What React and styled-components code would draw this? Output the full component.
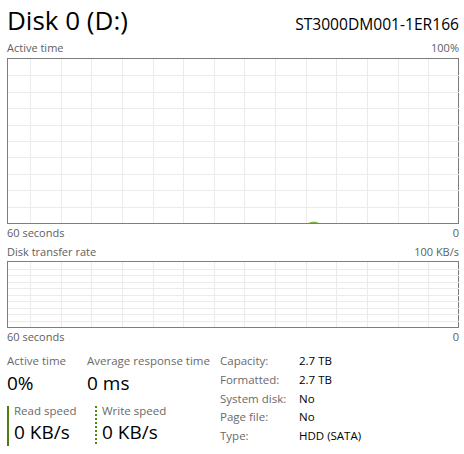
import React from "react";
import styled, { createGlobalStyle } from "styled-components";

const GlobalStyle = createGlobalStyle`
  html, body {
    margin: 0;
    padding: 0;
    background: #fff;
  }
  body {
    font-family: "Open Sans", "Noto Sans", sans-serif;
  }
`;

const Page = styled.div`
  width: 464px;
  height: 454px;
  box-sizing: border-box;
  padding: 2px 5px 0 7px;
  display: flex;
  flex-direction: column;
  overflow: hidden;
`;

const Header = styled.div`
  display: flex;
  align-items: baseline;
  justify-content: space-between;
  height: 36px;
`;

const Title = styled.div`
  font-size: 26px;
  line-height: 36px;
  color: #000;
`;

const Model = styled.div`
  font-size: 15.6px;
  color: #000;
`;

const ChartLabels = styled.div`
  display: flex;
  justify-content: space-between;
  font-size: 11px;
  line-height: ${({ $lh }) => $lh || 20}px;
  padding-top: ${({ $pad }) => $pad || 0}px;
  color: #606060;
`;

const Frame = styled.div`
  height: ${({ $h }) => $h}px;
  border: 1px solid #7d7d7d;
  box-sizing: border-box;
  svg {
    display: block;
  }
`;

const Stats = styled.div`
  display: flex;
  margin-top: 7px;
`;

const LeftStats = styled.div`
  width: 213px;
  display: flex;
  flex-direction: column;
`;

const StatRow = styled.div`
  display: flex;
`;

const Stat = styled.div`
  width: ${({ $w }) => $w}px;
`;

const StatLabel = styled.div`
  font-size: 11.5px;
  line-height: 18px;
  color: #6a6a6a;
  white-space: nowrap;
`;

const StatValue = styled.div`
  font-size: 19px;
  line-height: 26px;
  color: #000;
`;

const SpeedRow = styled.div`
  display: flex;
  margin-top: 10px;
`;

const Speed = styled.div`
  width: ${({ $w }) => $w}px;
  height: 40px;
  box-sizing: border-box;
  padding-left: 7px;
  background-image: ${({ $dotted }) =>
    $dotted
      ? "repeating-linear-gradient(to bottom, #4f8a10 0 2px, transparent 2px 4px)"
      : "linear-gradient(#4f7d0f, #4f7d0f)"};
  background-size: 2px 100%;
  background-repeat: no-repeat;
`;

const SpeedLabel = styled.div`
  font-size: 11.5px;
  line-height: 9px;
  color: #6a6a6a;
  white-space: nowrap;
`;

const SpeedValue = styled.div`
  font-size: 19px;
  line-height: 29px;
  padding-top: 3px;
  color: #000;
`;

const Details = styled.div`
  display: grid;
  grid-template-columns: 79px auto;
  font-size: 11.5px;
  line-height: 18px;
`;

const DKey = styled.div`
  color: #6a6a6a;
`;

const DVal = styled.div`
  color: #000;
`;

function Grid({ w, h, blip }) {
  const xs = [];
  for (let k = 0; k < 14; k++) xs.push(Math.round(22 + 30.63 * k) + 0.5);
  const ys = [];
  for (let k = 1; k < 10; k++) ys.push(Math.round((h * k) / 10) + 0.5);
  return (
    <svg width={w} height={h}>
      {xs.map((x) => (
        <line key={"x" + x} x1={x} x2={x} y1={0} y2={h} stroke="#ebebeb" strokeWidth="1" />
      ))}
      {ys.map((y) => (
        <line key={"y" + y} x1={0} x2={w} y1={y} y2={y} stroke="#ebebeb" strokeWidth="1" />
      ))}
      {blip && (
        <path
          d={`M300 ${h} L304 ${h - 1.3} L308 ${h - 1.3} L311 ${h} Z`}
          fill="#7fb545"
        />
      )}
    </svg>
  );
}

const details = [
  ["Capacity:", "2.7 TB"],
  ["Formatted:", "2.7 TB"],
  ["System disk:", "No"],
  ["Page file:", "No"],
  ["Type:", "HDD (SATA)"],
];

export default function App() {
  return (
    <>
      <GlobalStyle />
      <Page>
        <Header>
          <Title>Disk 0 (D:)</Title>
          <Model>ST3000DM001-1ER166</Model>
        </Header>

        <ChartLabels>
          <span>Active time</span>
          <span>100%</span>
        </ChartLabels>
        <Frame $h={166}>
          <Grid w={451} h={164} blip />
        </Frame>
        <ChartLabels $lh={17}>
          <span>60 seconds</span>
          <span>0</span>
        </ChartLabels>

        <ChartLabels $lh={18} $pad={2}>
          <span>Disk transfer rate</span>
          <span>100 KB/s</span>
        </ChartLabels>
        <Frame $h={67}>
          <Grid w={451} h={65} />
        </Frame>
        <ChartLabels $lh={17}>
          <span>60 seconds</span>
          <span>0</span>
        </ChartLabels>

        <Stats>
          <LeftStats>
            <StatRow>
              <Stat $w={80}>
                <StatLabel>Active time</StatLabel>
                <StatValue>0%</StatValue>
              </Stat>
              <Stat $w={133}>
                <StatLabel>Average response time</StatLabel>
                <StatValue>0 ms</StatValue>
              </Stat>
            </StatRow>
            <SpeedRow>
              <Speed $w={88}>
                <SpeedLabel>Read speed</SpeedLabel>
                <SpeedValue>0 KB/s</SpeedValue>
              </Speed>
              <Speed $w={100} $dotted>
                <SpeedLabel>Write speed</SpeedLabel>
                <SpeedValue>0 KB/s</SpeedValue>
              </Speed>
            </SpeedRow>
          </LeftStats>
          <Details>
            {details.map(([k, v]) => (
              <React.Fragment key={k}>
                <DKey>{k}</DKey>
                <DVal>{v}</DVal>
              </React.Fragment>
            ))}
          </Details>
        </Stats>
      </Page>
    </>
  );
}
